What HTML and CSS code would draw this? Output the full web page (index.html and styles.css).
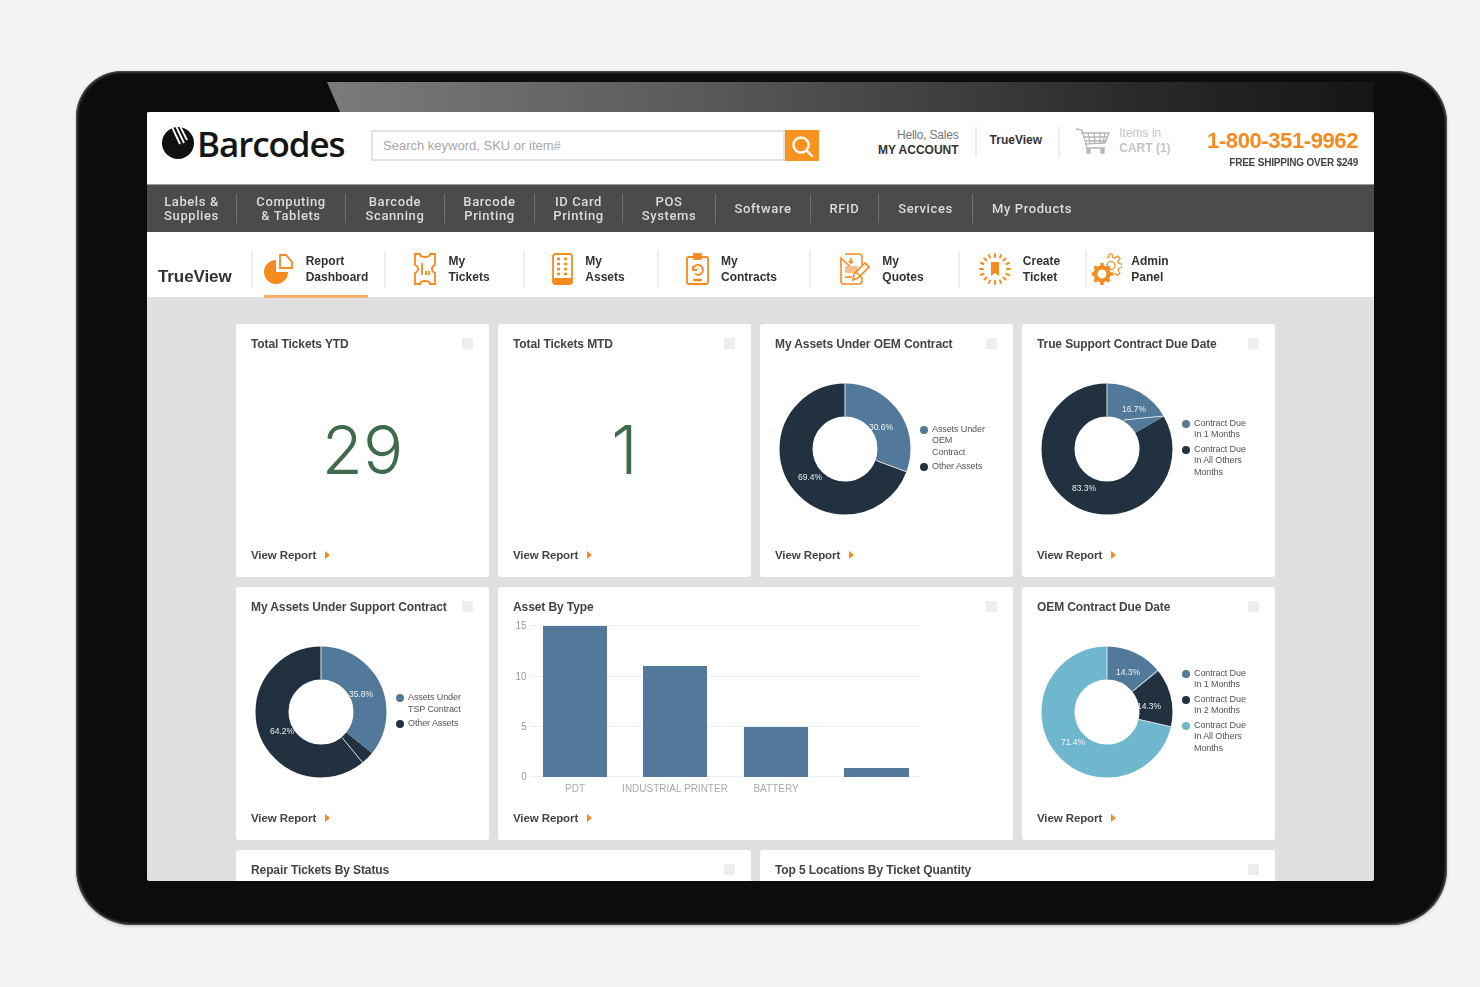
FILE: index.html
```html
<!DOCTYPE html>
<html lang="en">
<head>
    <meta charset="UTF-8">
    <title>Barcodes TrueView</title>
    <link rel="stylesheet" href="styles.css">
</head>
<body>
    <div class="tablet">
        <div class="gloss"></div>
        <div class="screen">
            <header class="top">
                <div class="logo">
                    <svg class="logo-mark" width="34" height="34" viewBox="0 0 34 34">
                        <circle cx="17" cy="17" r="16" fill="#111"/>
                        <path d="M11 1L19 18M15 0L23 17M19 0L26 14" stroke="#fff" stroke-width="1.8" fill="none"/>
                    </svg>
                    <span>Barcodes</span>
                </div>
                <div class="search">
                    <div class="search-input">Search keyword, SKU or item#</div>
                    <div class="search-btn">
                        <svg width="24" height="24" viewBox="0 0 24 24" fill="none" stroke="#fff" stroke-width="2.4">
                            <circle cx="11" cy="11" r="7.5"/>
                            <path d="M16.5 16.5L22 22" stroke-linecap="round"/>
                        </svg>
                    </div>
                </div>
                <div class="account">Hello, Sales<b>MY ACCOUNT</b></div>
                <div class="trueview-link">TrueView</div>
                <div class="cart">
                    <svg width="34" height="26" viewBox="0 0 34 26" fill="none" stroke="#b5b5b5" stroke-width="1.3">
                        <path d="M0 1L6 2L11 20H29"/>
                        <path d="M5 5H33L29 15L9 16M8 9H31M10 13H30M12 5L14 16M18 5L19 16M24 5L24 16M29 5L27 16"/>
                        <rect x="11" y="21" width="3" height="4" fill="#b5b5b5"/>
                        <rect x="25" y="21" width="3" height="4" fill="#b5b5b5"/>
                    </svg>
                    <div class="cart-text">Items in<b>CART (1)</b></div>
                </div>
                <div class="contact">
                    <div class="phone">1-800-351-9962</div>
                    <div class="shipping">FREE SHIPPING OVER $249</div>
                </div>
            </header>

            <nav class="main-nav">
                <a>Labels &amp;<br>Supplies</a>
                <a>Computing<br>&amp; Tablets</a>
                <a>Barcode<br>Scanning</a>
                <a>Barcode<br>Printing</a>
                <a>ID Card<br>Printing</a>
                <a>POS<br>Systems</a>
                <a>Software</a>
                <a>RFID</a>
                <a>Services</a>
                <a>My Products</a>
            </nav>

            <div class="sub-nav">
                <div class="brand">TrueView</div>
                <a class="sub-item active">
                    <svg width="30" height="30" viewBox="0 0 30 30">
                        <path d="M12 6A12 12 0 1 0 24 18H12Z" fill="#f58a1f"/>
                        <path d="M16 1H22L28 8V14H16Z" fill="none" stroke="#f58a1f" stroke-width="1.8"/>
                    </svg>
                    <span>Report<br>Dashboard</span>
                </a>
                <a class="sub-item">
                    <svg width="22" height="32" viewBox="0 0 22 32" fill="none" stroke="#f58a1f" stroke-width="1.8">
                        <path d="M1 1H6Q6 4 11 4T16 1H21V12Q18 13 18 16T21 20V31H16Q16 28 11 28T6 31H1V20Q4 19 4 16T1 12Z"/>
                        <path d="M8 10V22M12 18V22M15 18V22"/>
                    </svg>
                    <span>My<br>Tickets</span>
                </a>
                <a class="sub-item">
                    <svg width="21" height="32" viewBox="0 0 21 32">
                        <rect x="1" y="1" width="19" height="30" rx="2.5" fill="none" stroke="#f58a1f" stroke-width="1.8"/>
                        <path d="M1 25H20V28.5A2.5 2.5 0 0 1 17.5 31H3.5A2.5 2.5 0 0 1 1 28.5Z" fill="#f58a1f"/>
                        <path d="M5 6H8M12 6H15M5 11H8M12 11H15M5 16H8M12 16H15M5 21H8M12 21H15" stroke="#f58a1f" stroke-width="2.4"/>
                    </svg>
                    <span>My<br>Assets</span>
                </a>
                <a class="sub-item">
                    <svg width="23" height="32" viewBox="0 0 23 32" fill="none" stroke="#f58a1f" stroke-width="1.8">
                        <rect x="1" y="4" width="21" height="27" rx="1.5"/>
                        <rect x="8" y="1" width="7" height="5" fill="#f58a1f"/>
                        <path d="M7 16A5 5 0 1 1 9 21M7 13V17H11"/>
                        <path d="M7 27H16" stroke-width="2.4"/>
                    </svg>
                    <span>My<br>Contracts</span>
                </a>
                <a class="sub-item">
                    <svg width="30" height="32" viewBox="0 0 30 32" fill="none" stroke="#f58a1f" stroke-width="1.6">
                        <path d="M5 1H19A3 3 0 0 1 22 4V12M22 25V28A3 3 0 0 1 19 31H4A3 3 0 0 1 1 28V5Z"/>
                        <path d="M11 5V10M9 8L11 10L13 8"/>
                        <rect x="5" y="13" width="13" height="7" fill="#f9c08a" stroke="none"/>
                        <path d="M13 27L14 21L25 10L29 14L18 25Z"/>
                        <path d="M5 24H12"/>
                    </svg>
                    <span>My<br>Quotes</span>
                </a>
                <a class="sub-item">
                    <svg width="32" height="32" viewBox="0 0 32 32" fill="none" stroke="#f58a1f" stroke-width="2" stroke-linecap="round">
                        <path d="M12 9H20V23L16 20L12 23Z" fill="#f58a1f" stroke="none"/>
                        <path d="M16 1V4M16 28V31M1 16H4M28 16H31M5.5 5.5L7.5 7.5M24.5 24.5L26.5 26.5M26.5 5.5L24.5 7.5M7.5 24.5L5.5 26.5M10 2L11 4.500M22 2L21 4.500M10 30L11 27.500M22 30L21 27.500M2 10L4.500 11M2 22L4.500 21M30 10L27.500 11M30 22L27.500 21"/>
                    </svg>
                    <span>Create<br>Ticket</span>
                </a>
                <a class="sub-item">
                    <svg width="30" height="32" viewBox="0 0 30 32">
                        <path d="M17 1L20 1L20.500 4L23 5L25.500 3L28 5.500L26 8L27 10.500L30 11V14.500L27 15L26 17.500L28 20L25.500 22.500L23 20.500L22 21M15 5L16.500 4.500L17 1" fill="none" stroke="#f58a1f" stroke-width="1.2"/>
                        <circle cx="19" cy="12.500" r="4" fill="none" stroke="#f58a1f" stroke-width="1.2"/>
                        <circle cx="10" cy="21" r="6.500" fill="none" stroke="#f58a1f" stroke-width="4"/>
                        <path d="M10 10V13M10 29V32M-1 21H2M18 21H21M2.500 13.500L4.500 15.500M15.500 26.500L17.500 28.500M17.500 13.500L15.500 15.500M4.500 26.500L2.500 28.500" stroke="#f58a1f" stroke-width="3.4"/>
                    </svg>
                    <span>Admin<br>Panel</span>
                </a>
            </div>

            <main class="content">
                <section class="card">
                    <div class="card-head"><h3>Total Tickets YTD</h3><i class="card-box"></i></div>
                    <div class="card-body big-number">29</div>
                    <a class="view-report">View Report <em></em></a>
                </section>

                <section class="card">
                    <div class="card-head"><h3>Total Tickets MTD</h3><i class="card-box"></i></div>
                    <div class="card-body big-number">1</div>
                    <a class="view-report">View Report <em></em></a>
                </section>

                <section class="card">
                    <div class="card-head"><h3>My Assets Under OEM Contract</h3><i class="card-box"></i></div>
                    <div class="card-body">
                        <svg class="donut" width="132" height="132" viewBox="0 0 132 132">
                            <circle class="arc dark" cx="66" cy="66" r="49" pathLength="100" stroke-dasharray="69.4 100" stroke-dashoffset="-30.6"/>
                            <circle class="arc blue" cx="66" cy="66" r="49" pathLength="100" stroke-dasharray="30.6 100"/>
                            <path class="cut" d="M66 0V33M97 77.500L128 89"/>
                            <text x="102" y="47">30.6%</text>
                            <text x="31" y="97">69.4%</text>
                        </svg>
                        <ul class="legend">
                            <li><i class="blue"></i>Assets Under<br>OEM<br>Contract</li>
                            <li><i class="dark"></i>Other Assets</li>
                        </ul>
                    </div>
                    <a class="view-report">View Report <em></em></a>
                </section>

                <section class="card">
                    <div class="card-head"><h3>True Support Contract Due Date</h3><i class="card-box"></i></div>
                    <div class="card-body">
                        <svg class="donut" width="132" height="132" viewBox="0 0 132 132">
                            <circle class="arc dark" cx="66" cy="66" r="49" pathLength="100" stroke-dasharray="83.3 100" stroke-dashoffset="-16.7"/>
                            <circle class="arc blue" cx="66" cy="66" r="49" pathLength="100" stroke-dasharray="16.7 100"/>
                            <path class="cut" d="M66 0V33M82.500 37L123 33"/>
                            <text x="93" y="29">16.7%</text>
                            <text x="43" y="108">83.3%</text>
                        </svg>
                        <ul class="legend">
                            <li><i class="blue"></i>Contract Due<br>In 1 Months</li>
                            <li><i class="dark"></i>Contract Due<br>In All Others<br>Months</li>
                        </ul>
                    </div>
                    <a class="view-report">View Report <em></em></a>
                </section>

                <section class="card">
                    <div class="card-head"><h3>My Assets Under Support Contract</h3><i class="card-box"></i></div>
                    <div class="card-body">
                        <svg class="donut" width="132" height="132" viewBox="0 0 132 132">
                            <circle class="arc dark" cx="66" cy="66" r="49" pathLength="100" stroke-dasharray="64.2 100" stroke-dashoffset="-35.8"/>
                            <circle class="arc blue" cx="66" cy="66" r="49" pathLength="100" stroke-dasharray="35.8 100"/>
                            <path class="cut" d="M66 0V33M87 91.500L108 117"/>
                            <text x="106" y="51">35.8%</text>
                            <text x="27" y="88">64.2%</text>
                        </svg>
                        <ul class="legend">
                            <li><i class="blue"></i>Assets Under<br>TSP Contract</li>
                            <li><i class="dark"></i>Other Assets</li>
                        </ul>
                    </div>
                    <a class="view-report">View Report <em></em></a>
                </section>

                <section class="card wide">
                    <div class="card-head"><h3>Asset By Type</h3><i class="card-box"></i></div>
                    <div class="card-body chart-body">
                        <svg class="bars" width="420" height="190" viewBox="0 0 420 190">
                            <path class="grid" d="M17 11.500H407M17 62.500H407M17 112.500H407M17 162.500H407"/>
                            <text class="axis" x="8" y="15">15</text>
                            <text class="axis" x="8" y="66">10</text>
                            <text class="axis" x="11" y="116">5</text>
                            <text class="axis" x="11" y="166">0</text>
                            <rect class="bar" x="30" y="12" width="64" height="151"/>
                            <rect class="bar" x="130" y="52" width="64" height="111"/>
                            <rect class="bar" x="231" y="113" width="64" height="50"/>
                            <rect class="bar" x="331" y="154" width="65" height="9"/>
                            <text class="cat" x="62" y="178">PDT</text>
                            <text class="cat" x="162" y="178">INDUSTRIAL PRINTER</text>
                            <text class="cat" x="263" y="178">BATTERY</text>
                        </svg>
                    </div>
                    <a class="view-report">View Report <em></em></a>
                </section>

                <section class="card">
                    <div class="card-head"><h3>OEM Contract Due Date</h3><i class="card-box"></i></div>
                    <div class="card-body">
                        <svg class="donut" width="132" height="132" viewBox="0 0 132 132">
                            <circle class="arc teal" cx="66" cy="66" r="49" pathLength="100" stroke-dasharray="71.4 100" stroke-dashoffset="-28.6"/>
                            <circle class="arc dark" cx="66" cy="66" r="49" pathLength="100" stroke-dasharray="14.3 100" stroke-dashoffset="-14.3"/>
                            <circle class="arc blue" cx="66" cy="66" r="49" pathLength="100" stroke-dasharray="14.3 100"/>
                            <path class="cut" d="M66 0V33M92 45L117 24M98 73.500L131 81"/>
                            <text x="87" y="29">14.3%</text>
                            <text x="108" y="63">14.3%</text>
                            <text x="32" y="99">71.4%</text>
                        </svg>
                        <ul class="legend">
                            <li><i class="blue"></i>Contract Due<br>In 1 Months</li>
                            <li><i class="dark"></i>Contract Due<br>In 2 Months</li>
                            <li><i class="teal"></i>Contract Due<br>In All Others<br>Months</li>
                        </ul>
                    </div>
                    <a class="view-report">View Report <em></em></a>
                </section>

                <section class="card half">
                    <div class="card-head"><h3>Repair Tickets By Status</h3><i class="card-box"></i></div>
                </section>

                <section class="card half">
                    <div class="card-head"><h3>Top 5 Locations By Ticket Quantity</h3><i class="card-box"></i></div>
                </section>
            </main>
        </div>
    </div>
</body>
</html>
```

FILE: styles.css
```css
body {
    margin: 0;
    background-color: #f3f3f3;
    font-family: "Liberation Sans", Arial, sans-serif;
    height: 987px;
    overflow: hidden;
}
.tablet {
    position: relative;
    width: 1227px;
    height: 769px;
    margin: 71px 0 0 76px;
    padding: 41px 73px 44px 71px;
    background-color: #0c0c0c;
    border-radius: 46px 52px 56px 56px;
    box-shadow: inset 0 0 3px 1px #666, 0 1px 3px #bbb;
    filter: blur(0.5px);
}
/* light reflection over the top of the frame */
.gloss {
    position: absolute;
    top: 11px;
    right: 73px;
    left: 251px;
    height: 30px;
    background: linear-gradient(90deg, #7b7b7b 0%, #5a5a5a 35%, #2c2c2c 75%, #151515 100%);
    clip-path: polygon(0 0, 100% 0, 100% 100%, 13px 100%);
}
.screen {
    position: relative;
    height: 769px;
    overflow: hidden;
    background-color: #e0e0e0;
    border-radius: 2px;
}

/* top header */
.top {
    display: flex;
    align-items: center;
    height: 72px;
    background-color: #fff;
    box-sizing: border-box;
    padding: 0 16px 0 14px;
}
.logo {
    display: flex;
    align-items: center;
    width: 211px;
    font-family: "Open Sans", sans-serif;
    font-weight: 600;
    font-size: 35px;
    letter-spacing: -1.1px;
    color: #151515;
    margin-top: -10px;
}
.logo span {
    margin-left: 2px;
}
.search {
    display: flex;
    width: 450px;
    height: 31px;
    margin-top: -5px;
}
.search-input {
    flex: 1;
    border: 2px solid #e2e2e2;
    font-size: 13px;
    line-height: 27px;
    color: #a8a8a8;
    padding-left: 10px;
}
.search-btn {
    width: 34px;
    background-color: #f7931e;
    display: flex;
    align-items: center;
    justify-content: center;
}
.account {
    width: 90px;
    margin-left: 50px;
    text-align: right;
    font-size: 12px;
    line-height: 15px;
    color: #777;
    padding: 2px 16px 0 0;
    height: 29px;
    border-right: 2px solid #eee;
    margin-top: -13px;
    letter-spacing: -0.2px;
}
.account b {
    display: block;
    color: #333;
    letter-spacing: 0;
}
.trueview-link {
    width: 84px;
    box-sizing: border-box;
    height: 31px;
    line-height: 29px;
    padding-left: 13px;
    font-size: 12px;
    font-weight: bold;
    color: #333;
    border-right: 2px solid #eee;
    margin-top: -13px;
}
.cart {
    display: flex;
    align-items: center;
    gap: 9px;
    width: 123px;
    margin-left: 16px;
    margin-top: -14px;
}
.cart-text {
    font-size: 12px;
    line-height: 15px;
    color: #c4c4c4;
}
.cart-text b {
    display: block;
}
.contact {
    text-align: right;
    width: 160px;
    margin-left: auto;
    margin-top: 3px;
}
.phone {
    font-size: 22px;
    font-weight: bold;
    line-height: 26px;
    letter-spacing: -0.4px;
    color: #f58a1f;
}
.shipping {
    font-size: 10px;
    font-weight: bold;
    color: #444;
    line-height: 16px;
    margin-top: 1px;
    letter-spacing: -0.2px;
}

/* dark category bar */
.main-nav {
    display: grid;
    grid-template-columns: 90px 109px 99px 90px 88px 93px 95px 68px 94px 118px;
    align-items: center;
    height: 48px;
    background-color: #4b4b4b;
    border-top: 1px solid #999;
    box-sizing: border-box;
}
.main-nav a {
    display: flex;
    align-items: center;
    justify-content: center;
    height: 29px;
    text-align: center;
    font-family: Roboto, sans-serif;
    font-weight: 500;
    font-size: 13px;
    line-height: 14px;
    letter-spacing: 0.6px;
    color: #dcdcdc;
    border-right: 1px solid #707070;
}
.main-nav a:last-child {
    border-right: 0;
}

/* TrueView sub menu */
.sub-nav {
    display: grid;
    grid-template-columns: 104px 133px 139px 134px 152px 149px 127px 120px;
    align-items: center;
    height: 65px;
    background-color: #fff;
}
.brand {
    padding: 24px 0 0 11px;
    font-size: 17px;
    font-weight: bold;
    letter-spacing: -0.1px;
    color: #333;
}
.sub-item {
    position: relative;
    display: flex;
    align-items: center;
    justify-content: center;
    gap: 12px;
    height: 36px;
    box-sizing: border-box;
    padding-right: 5px;
    margin-top: 9px;
    border-left: 2px solid #eee;
    font-size: 12px;
    font-weight: bold;
    line-height: 16px;
    color: #333;
}
.sub-item:nth-child(7) {
    padding-right: 6px;
}
.sub-item:last-child {
    gap: 9px;
    padding-right: 31px;
}
.sub-item.active::after {
    content: "";
    position: absolute;
    left: 11px;
    right: 16px;
    bottom: -11px;
    height: 3px;
    background-color: #f9b36c;
}

/* dashboard grid */
.content {
    display: grid;
    grid-template-columns: repeat(4, 253px);
    grid-auto-rows: 253px;
    gap: 10px 9px;
    padding: 27px 0 0 89px;
}
.card {
    display: flex;
    flex-direction: column;
    box-sizing: border-box;
    padding: 13px 15px 15px;
    background-color: #fff;
    border-radius: 3px;
}
.wide, .half {
    grid-column: span 2;
}
.card-head {
    display: flex;
    justify-content: space-between;
    height: 14px;
}
.card-head h3 {
    margin: 0;
    font-size: 12px;
    line-height: 14px;
    font-weight: bold;
    color: #444;
    letter-spacing: -0.1px;
}
.card-box {
    width: 11px;
    height: 11px;
    margin: 1px 1px 0 0;
    background-color: #eee;
}
.card-body {
    flex: 1;
    display: flex;
    align-items: center;
    min-height: 0;
}
.big-number {
    justify-content: center;
    font-family: Inter, sans-serif;
    font-weight: 300;
    font-size: 67px;
    color: #3f6b4c;
}
.donut {
    flex: none;
    margin: 0 0 0 4px;
    transform: translateY(-1px);
}
.arc {
    fill: none;
    stroke-width: 33;
    transform: rotate(-90deg);
    transform-origin: 66px 66px;
}
.arc.blue {
    stroke: #527999;
}
.arc.dark {
    stroke: #22313f;
}
.arc.teal {
    stroke: #6fb7cc;
}
.cut {
    stroke: #dfe5ea;
    stroke-width: 1;
    fill: none;
}
.donut text {
    font-size: 8.500px;
    fill: #fff;
    text-anchor: middle;
    opacity: 0.9;
}
.legend {
    list-style: none;
    margin: 0 0 0 9px;
    padding: 0;
    font-size: 9px;
    line-height: 11.500px;
    color: #555;
    letter-spacing: -0.1px;
}
.legend li {
    position: relative;
    padding: 0 0 3px 12px;
    white-space: nowrap;
}
.legend i {
    position: absolute;
    left: 0;
    top: 2px;
    width: 8px;
    height: 8px;
    border-radius: 50%;
}
.legend i.blue {
    background-color: #527999;
}
.legend i.dark {
    background-color: #22313f;
}
.legend i.teal {
    background-color: #6fb7cc;
}
.chart-body {
    align-items: flex-start;
}
.bars {
    flex: none;
}
.grid {
    stroke: #eee;
    stroke-width: 1;
    fill: none;
}
.axis {
    font-size: 10px;
    fill: #999;
    text-anchor: middle;
}
.bar {
    fill: #527999;
}
.cat {
    font-size: 10px;
    fill: #aaa;
    text-anchor: middle;
}
.view-report {
    display: flex;
    align-items: center;
    gap: 9px;
    height: 14px;
    font-size: 11.500px;
    line-height: 14px;
    font-weight: bold;
    color: #444;
    letter-spacing: -0.1px;
}
.view-report em {
    width: 0;
    height: 0;
    border-left: 5px solid #f58a1f;
    border-top: 4px solid transparent;
    border-bottom: 4px solid transparent;
}
```
